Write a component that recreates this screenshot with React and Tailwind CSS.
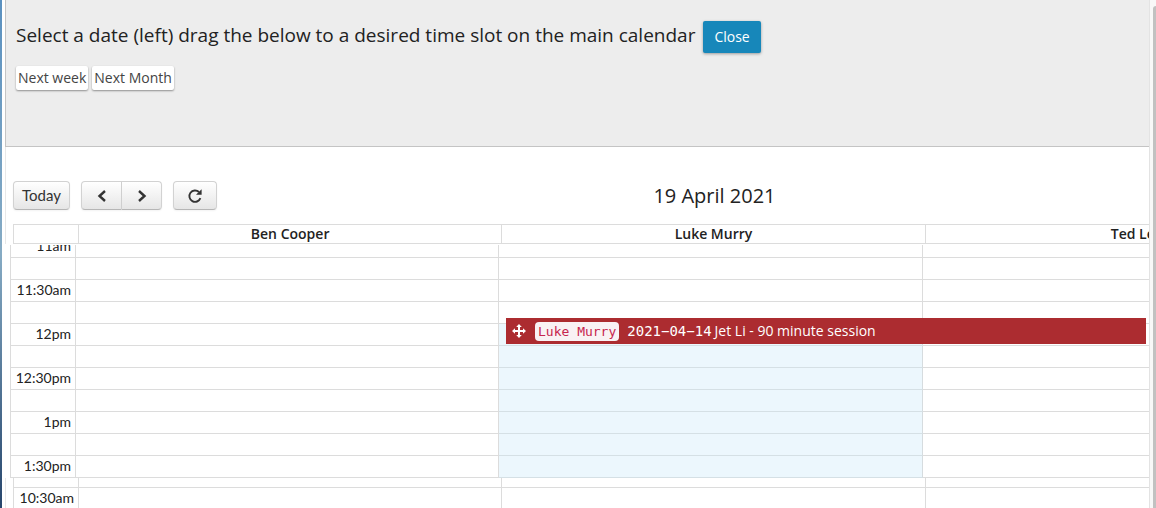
const line = "border-[#dcdcdc]";
const names = ["Ben Cooper", "Luke Murry", "Ted Lee"];
const slots = ["11am", "", "11:30am", "", "12pm", "", "12:30pm", "", "1pm", "", "1:30pm"];

function Columns() {
  return (
    <colgroup>
      <col className="w-[66px]" />
      <col />
      <col />
      <col />
    </colgroup>
  );
}

function SlotRow({ label, active }) {
  return (
    <tr className="h-[22px]">
      <th scope="row" className={`border-b border-l border-r ${line} p-0 pr-1 text-right align-top text-sm leading-5 font-normal font-[family-name:Lato,sans-serif]`}>
        {label}
      </th>
      <td className={`border-b border-r ${line} p-0`} />
      <td className={active ? "border-r border-b border-r-[#d6dcdf] border-b-[#d5e0e5] bg-[#ecf7fd] p-0" : `border-b border-r ${line} p-0`} />
      <td className={`border-b border-r ${line} p-0`} />
    </tr>
  );
}

const tableClass = "table-fixed border-separate border-spacing-0";
const toolButton =
  "flex h-[29px] items-center justify-center border border-[#d2d2d2] border-b-[#b6b6b6] bg-linear-to-b from-white to-[#e6e6e6] text-[#333] shadow-xs";
const lightButton = "h-6 rounded-xs bg-white px-[2px] text-sm leading-5 text-[#444] shadow-[0_1px_2px_rgba(0,0,0,0.4)]";

export default function App() {
  return (
    <div className="flex h-screen overflow-hidden bg-white font-[family-name:'Open_Sans',sans-serif] text-[#222]">
      <div className="w-[2px] shrink-0 bg-linear-to-b from-[#5b91c0] via-[#86abc4] to-[#27466c]" />
      <main className="ml-[3px] flex min-w-0 flex-1 flex-col overflow-hidden border-r border-[#e3e3e3]">
        <section className="h-[147px] shrink-0 border-b border-l border-[#c4c4c4] bg-[#ededed] px-[10px] pt-[21px]">
          <div className="flex items-start gap-2">
            <h1 className="text-[19px] leading-7 font-normal whitespace-nowrap">
              Select a date (left) drag the below to a desired time slot on the main calendar
            </h1>
            <button type="button" className="h-8 rounded-xs bg-[#1787ba] px-[11px] text-sm text-white shadow-[0_1px_3px_rgba(0,0,0,0.35)]">
              Close
            </button>
          </div>
          <div className="mt-[13px] flex gap-1">
            <button type="button" className={lightButton}>Next week</button>
            <button type="button" className={lightButton}>Next Month</button>
          </div>
        </section>

        <section className="shrink-0 overflow-hidden border-l border-[#e8e8e8] pl-[7px]">
          <header className="flex w-[117.6%] items-center pt-[34px] pr-[137px]">
            <div className="flex">
              <button type="button" className={`${toolButton} w-[57px] rounded font-[family-name:Lato,sans-serif] text-[15px]`}>Today</button>
              <div className="ml-[11px] flex">
                <button type="button" aria-label="Previous day" className={`${toolButton} w-[41px] rounded-l`}>
                  <svg width="10" height="12" viewBox="0 0 10 12" fill="none" stroke="currentColor" strokeWidth="2.4"><path d="M8 1 2.500 6 8 11" /></svg>
                </button>
                <button type="button" aria-label="Next day" className={`${toolButton} w-10 rounded-r border-l-0`}>
                  <svg width="10" height="12" viewBox="0 0 10 12" fill="none" stroke="currentColor" strokeWidth="2.4"><path d="M2 1 7.500 6 2 11" /></svg>
                </button>
              </div>
              <button type="button" aria-label="Refresh" className={`${toolButton} ml-[11px] w-11 rounded`}>
                <svg width="16" height="16" viewBox="0 0 16 16"><path d="M13.400 10.200A5.700 5.700 0 1 1 12 4" fill="none" stroke="currentColor" strokeWidth="1.9" /><path d="M14.600 1.200v5.600H9z" fill="currentColor" /></svg>
              </button>
            </div>
            <h2 className="flex-1 text-center text-xl leading-7 font-normal">19 April 2021</h2>
          </header>
          <table className={`${tableClass} mt-[14px] w-[117.6%]`}>
            <Columns />
            <thead>
              <tr className="h-5">
                <td className={`border ${line} p-0`} />
                {names.map((name) => (
                  <th key={name} scope="col" className={`border-y border-r ${line} p-0 text-center text-sm leading-[18px] font-semibold`}>{name}</th>
                ))}
              </tr>
            </thead>
          </table>
        </section>

        <section className="relative mt-px shrink-0 pl-[5px]">
          <div className="overflow-hidden">
            <table className={`${tableClass} -mt-[9px] w-[117.3%]`}>
              <Columns />
              <tbody>
                {slots.map((label, i) => (
                  <SlotRow key={i} label={label} active={i >= 4} />
                ))}
              </tbody>
            </table>
          </div>
          <div className="absolute top-[73px] right-[3px] left-[501px] flex h-[26px] items-center bg-[#ac2c30] pl-[6px] text-sm whitespace-nowrap text-white">
            <svg width="14" height="14" viewBox="0 0 14 14" fill="currentColor"><path d="M7 0l2.800 3H8v3h3V4.200L14 7l-3 2.800V8H8v3h1.800L7 14l-2.800-3H6V8H3v1.800L0 7l3-2.800V6h3V3H4.200z" /></svg>
            <code className="ml-[9px] rounded bg-[#f9f2f4] px-[3px] font-[family-name:'DejaVu_Sans_Mono',monospace] text-[13px] leading-[19px] text-[#c7254e]">Luke Murry</code>
            <span className="ml-2 font-[family-name:'DejaVu_Sans_Mono',monospace]">2021−04−14</span>
            <span className="ml-[3px]">Jet Li - 90 minute session</span>
          </div>
        </section>

        <section className="min-h-0 flex-1 overflow-hidden border-l border-[#e8e8e8] pl-[7px]">
          <table className={`${tableClass} -mt-3 w-[117.6%]`}>
            <Columns />
            <tbody>
              <SlotRow label="" />
              <SlotRow label="10:30am" />
            </tbody>
          </table>
        </section>
      </main>
      <div className="w-[3px] shrink-0 bg-[#f8f8f8]" />
      <div className="w-[3px] shrink-0 bg-[#f8f8f8] pt-[6px]"><div className="h-full rounded-tl-sm bg-[#c1c1c1]" /></div>
    </div>
  );
}
